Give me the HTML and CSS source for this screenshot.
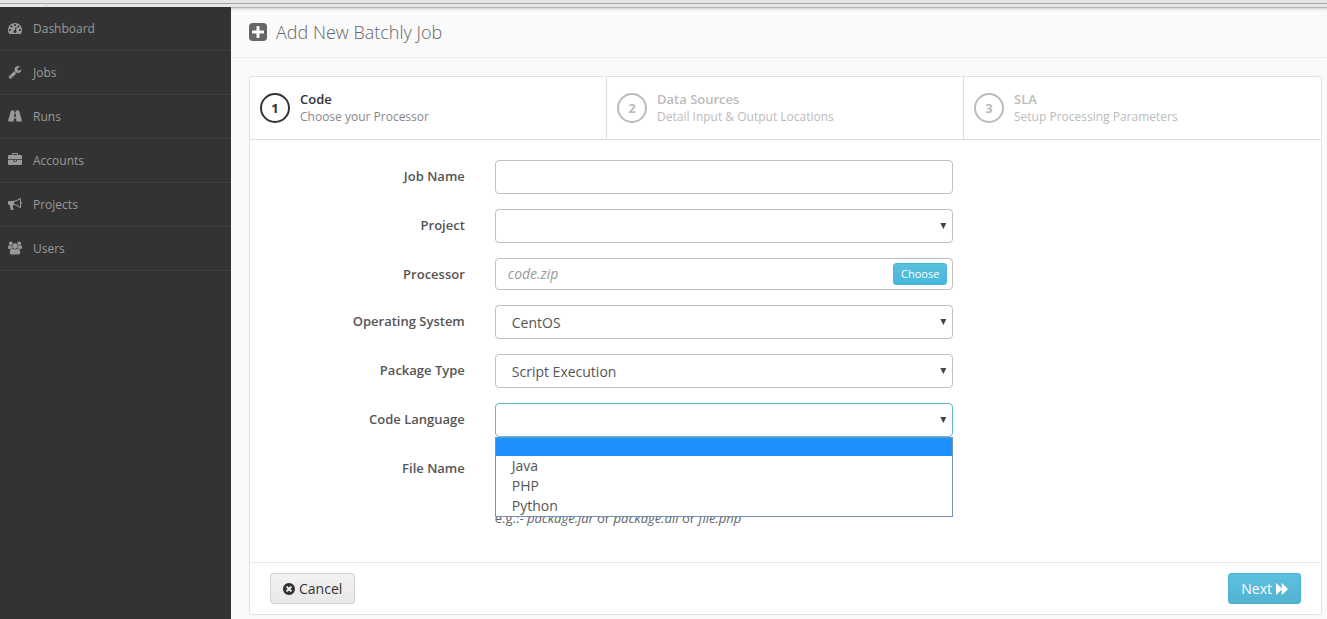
FILE: index.html
```html
<!DOCTYPE html>
<html lang="en">
<head>
<meta charset="utf-8">
<title>Add New Batchly Job</title>
<link rel="stylesheet" href="styles.css">
</head>
<body>
<div class="topbar"><div class="topbar-tab"></div></div>
<div class="shell">
  <nav class="sidebar">
    <a class="nav-item" href="#"><svg class="nav-icon" viewBox="0 0 1792 1792"><path d="M384 1152q0-53-37.500-90.500t-90.500-37.500-90.500 37.500-37.500 90.500 37.500 90.500 90.500 37.500 90.500-37.500 37.500-90.500zm192-448q0-53-37.500-90.500t-90.500-37.500-90.500 37.500-37.500 90.500 37.500 90.500 90.500 37.500 90.500-37.500 37.500-90.500zm428 481l101-382q6-26-7.500-48.500t-38.500-29.500-48 6.500-30 39.500l-101 382q-60 5-107 43.500t-63 98.500q-20 77 20 146t117 89 146-20 89-117q16-60-6-117t-72-91zm660-33q0-53-37.500-90.500t-90.500-37.500-90.500 37.500-37.500 90.500 37.500 90.500 90.500 37.500 90.500-37.500 37.500-90.500zm-640-640q0-53-37.500-90.500t-90.500-37.500-90.500 37.500-37.500 90.500 37.500 90.500 90.500 37.500 90.500-37.500 37.500-90.500zm448 192q0-53-37.500-90.500t-90.500-37.500-90.500 37.500-37.500 90.500 37.500 90.500 90.500 37.500 90.500-37.500 37.500-90.500zm320 448q0 261-141 483-19 29-54 29h-1402q-35 0-54-29-141-221-141-483 0-182 71-348t191-286 286-191 348-71 348 71 286 191 191 286 71 348z"/></svg><span>Dashboard</span></a>
    <a class="nav-item" href="#"><svg class="nav-icon" viewBox="0 0 1792 1792"><path d="M448 1472q0-26-19-45t-45-19-45 19-19 45 19 45 45 19 45-19 19-45zm644-420l-682 682q-37 37-90 37-52 0-91-37l-106-108q-38-36-38-90 0-53 38-91l681-681q39 98 114.500 173.500t173.500 114.500zm634-435q0 39-23 106-47 134-164.500 217.500t-258.500 83.500q-185 0-316.500-131.500t-131.500-316.500 131.500-316.500 316.500-131.500q58 0 121.500 16.500t107.500 46.500q16 11 16 28t-16 28l-293 169v224l193 107q5-3 79-48.500t135.500-81 70.500-35.500q15 0 23.500 10t8.500 25z"/></svg><span>Jobs</span></a>
    <a class="nav-item" href="#"><svg class="nav-icon" viewBox="0 0 14 14"><path fill-rule="evenodd" d="M3.400 1.500H6.300L6.200 3.500H7.800L7.700 1.500H10.600Q11 1.500 11.200 2L13.900 11.500Q14 12.500 13.400 12.500H8.300L8.100 9.500H5.900L5.700 12.500H.6Q0 12.500.1 11.500L2.800 2Q3 1.500 3.400 1.500ZM6.200 4.700 6 7.800H8L7.800 4.700Z"/></svg><span>Runs</span></a>
    <a class="nav-item" href="#"><svg class="nav-icon" viewBox="0 0 1792 1792"><path d="M640 256h512v-128h-512v128zm1152 640v480q0 66-47 113t-113 47h-1472q-66 0-113-47t-47-113v-480h672v160q0 26 19 45t45 19h320q26 0 45-19t19-45v-160h672zm-768 0v128h-256v-128h256zm768-480v384h-1792v-384q0-66 47-113t113-47h352v-160q0-40 28-68t68-28h576q40 0 68 28t28 68v160h352q66 0 113 47t47 113z"/></svg><span>Accounts</span></a>
    <a class="nav-item" href="#"><svg class="nav-icon" viewBox="0 0 1792 1792"><path d="M1664 640q53 0 90.500 37.500t37.500 90.500-37.500 90.500-90.500 37.500v384q0 52-38 90t-90 38q-417-347-812-380-58 19-91 66t-31 100.500 40 92.500q-20 33-23 65.500t6 58 33.500 55 48 50 61.500 50.500q-29 58-111.500 83t-168.500 11.500-132-55.500q-7-23-29.500-87.500t-32-94.500-23-89-15-101 3.500-98.500 22-110.500h-122q-66 0-113-47t-47-113v-192q0-66 47-113t113-47h480q435 0 896-384 52 0 90 38t38 90v384zm-128 604v-954q-394 302-768 343v270q377 42 768 341z"/></svg><span>Projects</span></a>
    <a class="nav-item" href="#"><svg class="nav-icon" viewBox="0 0 1920 1792"><path d="M593 896q-162 5-265 128h-134q-82 0-138-40.500t-56-118.500q0-353 124-353 6 0 43.500 21t97.500 42.500 119 21.500q67 0 133-23-5 37-5 66 0 139 81 256zm1071 637q0 120-73 189.500t-194 69.500h-874q-121 0-194-69.500t-73-189.500q0-53 3.500-103.500t14-109 26.500-108.500 43-97.500 62-81 85.500-53.500 111.500-20q10 0 43 21.500t73 48 107 48 135 21.500 135-21.500 107-48 73-48 43-21.500q61 0 111.500 20t85.500 53.500 62 81 43 97.500 26.500 108.500 14 109 3.500 103.500zm-1024-1277q0 106-75 181t-181 75-181-75-75-181 75-181 181-75 181 75 75 181zm704 384q0 159-112.500 271.500t-271.500 112.500-271.500-112.500-112.500-271.500 112.500-271.500 271.500-112.500 271.500 112.500 112.500 271.500zm576 225q0 78-56 118.500t-138 40.500h-134q-103-123-265-128 81-117 81-256 0-29-5-66 66 23 133 23 59 0 119-21.500t97.500-42.500 43.500-21q124 0 124 353zm-128-609q0 106-75 181t-181 75-181-75-75-181 75-181 181-75 181 75 75 181z"/></svg><span>Users</span></a>
  </nav>
  <main class="main">
    <header class="page-head">
      <svg class="head-icon" viewBox="128 128 1536 1536"><path d="M1408 960v-128q0-26-19-45t-45-19h-320v-320q0-26-19-45t-45-19h-128q-26 0-45 19t-19 45v320h-320q-26 0-45 19t-19 45v128q0 26 19 45t45 19h320v320q0 26 19 45t45 19h128q26 0 45-19t19-45v-320h320q26 0 45-19t19-45zm256-544v960q0 119-84.500 203.500t-203.500 84.500h-960q-119 0-203.500-84.500t-84.500-203.500v-960q0-119 84.500-203.500t203.500-84.500h960q119 0 203.500 84.500t84.500 203.500z"/></svg>
      <h1 class="page-title">Add New Batchly Job</h1>
    </header>
    <form class="panel">
      <ol class="steps">
        <li class="step step-active"><span class="step-num">1</span><div class="step-text"><div class="step-name">Code</div><div class="step-desc">Choose your Processor</div></div></li>
        <li class="step"><span class="step-num">2</span><div class="step-text"><div class="step-name">Data Sources</div><div class="step-desc">Detail Input &amp; Output Locations</div></div></li>
        <li class="step"><span class="step-num">3</span><div class="step-text"><div class="step-name">SLA</div><div class="step-desc">Setup Processing Parameters</div></div></li>
      </ol>
      <div class="fields">
        <div class="row"><label class="label" for="job">Job Name</label><input class="control" id="job" type="text"></div>
        <div class="row"><label class="label" for="project">Project</label><div class="select-wrap"><select class="control" id="project"><option></option></select></div></div>
        <div class="row"><label class="label" for="processor">Processor</label><div class="file-box"><input class="file-name" id="processor" type="text" placeholder="code.zip"><button class="choose" type="button">Choose</button></div></div>
        <div class="row"><label class="label" for="os">Operating System</label><div class="select-wrap"><select class="control" id="os"><option>CentOS</option></select></div></div>
        <div class="row"><label class="label" for="package">Package Type</label><div class="select-wrap"><select class="control" id="package"><option>Script Execution</option></select></div></div>
        <div class="row"><label class="label" for="language">Code Language</label>
          <div class="select-wrap">
            <select class="control control-open" id="language"><option></option><option>Java</option><option>PHP</option><option>Python</option></select>
            <ul class="menu" role="listbox" aria-label="Code Language">
              <li class="option option-active" role="option" aria-selected="true"></li>
              <li class="option" role="option">Java</li>
              <li class="option" role="option">PHP</li>
              <li class="option" role="option">Python</li>
            </ul>
          </div>
        </div>
        <div class="row"><label class="label" for="file">File Name</label><div><input class="control" id="file" type="text"><p class="hint">e.g.:- <em>package.jar</em> or <em>package.dll</em> or <em>file.php</em></p></div></div>
      </div>
      <footer class="actions">
        <button class="btn" type="button"><svg class="btn-icon" viewBox="128 128 1536 1536"><path d="M1277 1122q0-26-19-45l-181-181 181-181q19-19 19-45 0-27-19-46l-90-90q-19-19-46-19-26 0-45 19l-181 181-181-181q-19-19-45-19-27 0-46 19l-90 90q-19 19-19 46 0 26 19 45l181 181-181 181q-19 19-19 45 0 27 19 46l90 90q19 19 46 19 26 0 45-19l181-181 181 181q19 19 45 19 27 0 46-19l90-90q19-19 19-46zm387-226q0 209-103 385.500t-279.500 279.500-385.500 103-385.500-103-279.500-279.500-103-385.500 103-385.500 279.500-279.500 385.500-103 385.500 103 279.500 279.500 103 385.500z"/></svg>Cancel</button>
        <button class="btn btn-next" type="button">Next<svg class="btn-icon" viewBox="0 0 12 12"><path d="M0 .4Q0-.2.500.2L5.700 5.400V.4Q5.700-.2 6.200.2L11.800 5.700Q12.100 6 11.800 6.300L6.200 11.800Q5.700 12.200 5.700 11.600V6.600L.5 11.800Q0 12.200 0 11.600Z"/></svg></button>
      </footer>
    </form>
  </main>
</div>
</body>
</html>
```
FILE: styles.css
```css
* { box-sizing: border-box; }

body {
  margin: 0;
  min-height: 100vh;
  display: flex;
  flex-direction: column;
  background: #fafafa;
  color: #555;
  font: 14px/20px "Open Sans", sans-serif;
}

svg { fill: currentColor; flex: none; }

.topbar {
  height: 7px;
  background: linear-gradient(#e6e6e6 3px, #a6a6a6 3px, #a6a6a6 4px, #e8e8e8 4px);
}
.topbar-tab { width: 47px; height: 7px; border-right: 1px solid #d0d0d0; clip-path: inset(4px 0 0 0); }

.shell { flex: 1; display: flex; }

.sidebar { width: 231px; flex: none; background: #333; }
.nav-item {
  display: flex;
  align-items: center;
  gap: 11px;
  height: 44px;
  padding: 0 8px;
  border-bottom: 1px solid #3e3e3e;
  color: #999;
  font-size: 12px;
  text-decoration: none;
}
.nav-icon { width: 14px; height: 14px; margin-bottom: 2px; }

.main { flex: 1; min-width: 0; }
.page-head {
  display: flex;
  align-items: center;
  gap: 9px;
  height: 51px;
  padding: 0 18px;
  border-top: 1px solid #b4b4b4;
  border-bottom: 1px solid #eee;
  box-shadow: inset 0 3px 3px -2px #ccc;
  color: #666;
}
.head-icon { width: 18px; height: 18px; margin-bottom: 2px; }
.page-title { margin: 0 0 2px; font-size: 18px; font-weight: 300; line-height: 24px; }

.panel {
  margin: 18px 5px 4px 18px;
  border: 1px solid #e2e2e2;
  border-radius: 3px;
  background: #fff;
}

.steps {
  display: grid;
  grid-template-columns: repeat(3, 1fr);
  margin: 0;
  padding: 0;
  list-style: none;
  border-bottom: 1px solid #ddd;
}
.step {
  display: flex;
  align-items: center;
  gap: 10px;
  height: 62px;
  padding: 0 10px;
  border-right: 1px solid #ddd;
  color: #bbb;
}
.step:last-child { border-right: 0; }
.step-num {
  width: 30px;
  height: 30px;
  border: 2px solid #bbb;
  border-radius: 50%;
  font-size: 13px;
  font-weight: 700;
  line-height: 26px;
  text-align: center;
}
.step-text { display: grid; gap: 2px; }
.step-name { font-size: 13px; font-weight: 600; line-height: 16px; }
.step-desc { font-size: 12px; line-height: 16px; }
.step-active { color: #333; }
.step-active .step-num { border-color: #333; }
.step-active .step-desc { color: #888; }

.fields {
  display: grid;
  gap: 15px;
  padding: 20px 0 34px;
}
.row {
  display: grid;
  grid-template-columns: 215fr 30px 459fr 368fr;
}
.row > :nth-child(2) { grid-column: 3; }
.label {
  padding-top: 6px;
  font-size: 13px;
  font-weight: 600;
  text-align: right;
}

.control {
  display: block;
  width: 100%;
  height: 34px;
  padding: 6px 12px;
  border: 1px solid #c0c0c0;
  border-radius: 4px;
  background: #fff;
  color: #555;
  font: inherit;
  outline: 0;
}
select.control { appearance: none; padding: 7px 16px 5px; }
.control-open { border-color: #66b8d0; }
.select-wrap { position: relative; }
.select-wrap::after {
  content: "";
  position: absolute;
  top: 14px;
  right: 7px;
  width: 6px;
  height: 6px;
  background: #444;
  clip-path: polygon(0 0, 100% 0, 50% 100%);
  pointer-events: none;
}
.file-box {
  display: flex;
  align-items: center;
  height: 32px;
  padding: 0 5px 0 12px;
  border: 1px solid #c0c0c0;
  border-radius: 4px;
}
.file-name {
  flex: 1;
  min-width: 0;
  padding: 0;
  border: 0;
  outline: 0;
  background: none;
  font: inherit;
}
.file-name::placeholder { color: #999; font-style: italic; }
.choose {
  height: 22px;
  padding: 0 7px;
  border: 1px solid #46b8da;
  border-radius: 3px;
  background: linear-gradient(#5bc0de, #46b8da);
  color: #fff;
  font: 11px/20px "Open Sans", sans-serif;
}

.menu {
  position: absolute;
  z-index: 1;
  top: 34px;
  left: 0;
  right: 0;
  margin: 0;
  padding: 0;
  border: 1px solid #6f93bd;
  background: #fff;
  list-style: none;
}
.option { height: 20px; padding: 0 16px; }
.option-active { height: 18px; background: #1e90ff; }
.hint { margin: 22px 0 0; color: #666; font-size: 13px; }

.actions {
  display: flex;
  justify-content: space-between;
  padding: 10px 20px;
  border-top: 1px solid #e8e8e8;
}
.btn {
  display: flex;
  align-items: center;
  gap: 4px;
  height: 31px;
  padding: 0 12px;
  border: 1px solid #d2d2d2;
  border-radius: 3px;
  background: linear-gradient(#f2f2f2, #e8e8e8);
  color: #333;
  font: inherit;
}
.btn-icon { width: 12px; height: 12px; }
.btn-next {
  border-color: #4bb0cc;
  background: linear-gradient(#5bc0de, #52b4d2);
  color: #fff;
}
```
